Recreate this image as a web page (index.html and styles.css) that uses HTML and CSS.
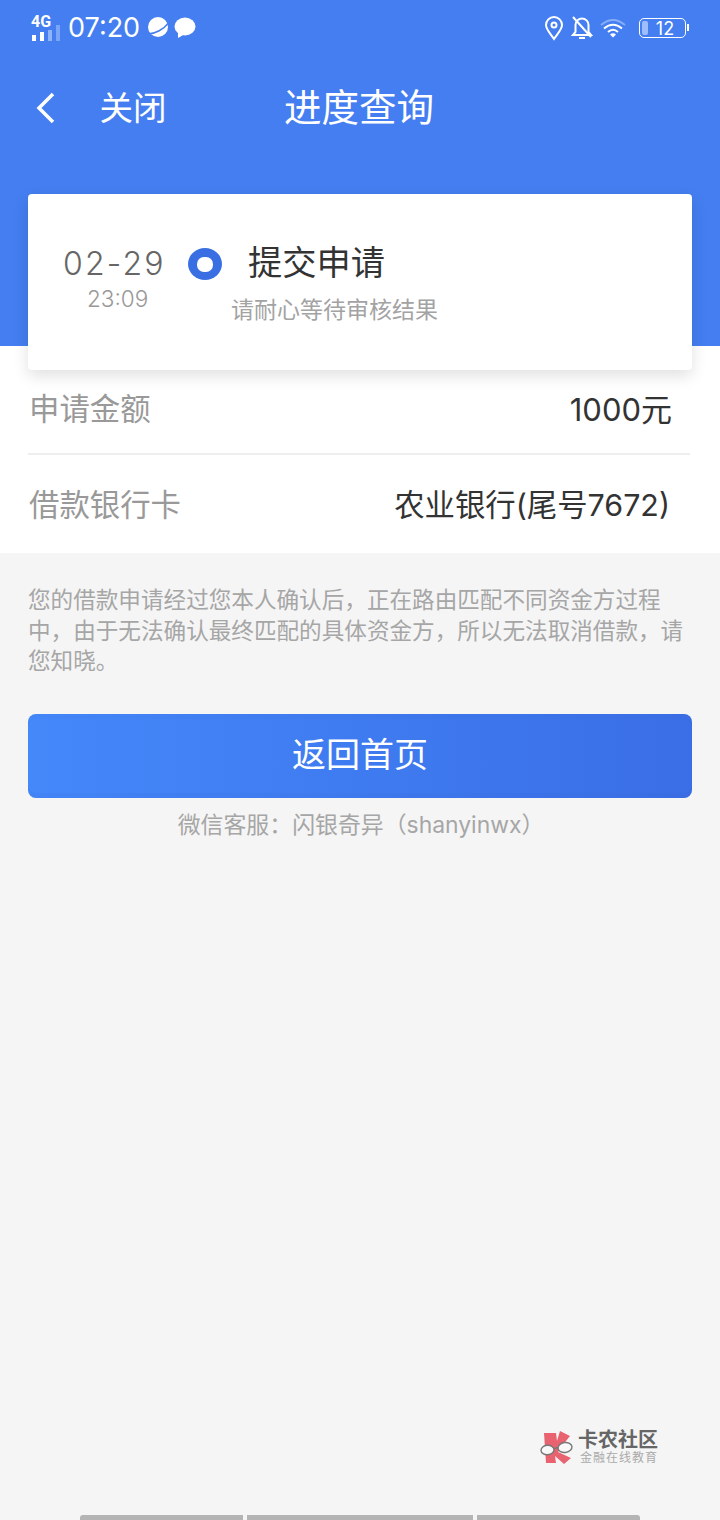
FILE: index.html
```html
<!DOCTYPE html>
<html lang="zh">
<head>
<meta charset="utf-8">
<title>进度查询</title>
<link rel="stylesheet" href="styles.css">
</head>
<body>
<div class="page">
  <header class="hero">
    <div class="status">
      <div class="status-left">
        <div class="signal">
          <span class="net">4G</span>
          <svg class="bars" width="30" height="17" viewBox="0 0 30 17"><rect x="0" y="10" width="4" height="6" fill="#fff"/><rect x="8" y="7" width="4" height="9" fill="#fff"/><rect x="16" y="5" width="4" height="11" fill="#8fb4fa"/><rect x="24" y="0" width="4" height="16" fill="#7ba6f8"/></svg>
        </div>
        <span class="clock">07:20</span>
        <svg class="sicon" width="22" height="22" viewBox="0 0 22 22"><circle cx="11" cy="10" r="10" fill="#fff"/><path d="M1 17C8 17 17 12 21.500 6" fill="none" stroke="#447ef0" stroke-width="1.500"/></svg>
        <svg class="sicon chat" width="22" height="22" viewBox="0 0 22 22"><ellipse cx="11" cy="9.500" rx="10.500" ry="9" fill="#fff"/><path d="M4 14l0 7 7-4z" fill="#fff"/></svg>
      </div>
      <div class="status-right">
        <svg width="20" height="26" viewBox="0 0 20 26"><path d="M10 24C5 17 2 14 2 10a8 8 0 0 1 16 0c0 4-3 7-8 14z" fill="none" stroke="#fff" stroke-width="2"/><circle cx="10" cy="10" r="2.500" fill="none" stroke="#fff" stroke-width="2"/></svg>
        <svg width="22" height="26" viewBox="0 0 22 26"><path d="M2 20h18l-2.500-3V10a6.500 6.500 0 0 0-13 0v7z" fill="none" stroke="#fff" stroke-width="2"/><path d="M8 23h6" stroke="#fff" stroke-width="2"/><path d="M2 2l18 20" stroke="#fff" stroke-width="2"/></svg>
        <svg width="26" height="20" viewBox="0 0 26 20"><path d="M1 7Q13-3 25 7" fill="none" stroke="#86adf9" stroke-width="2"/><path d="M4 10.500Q13 3 22 10.500" fill="none" stroke="#fff" stroke-width="2"/><path d="M8 14Q13 9.500 18 14" fill="none" stroke="#fff" stroke-width="2"/><path d="M10 16.500Q13 14 16 16.500L13 19.500z" fill="#fff"/></svg>
        <div class="battery"><span class="level"></span><span class="pct">12</span></div>
      </div>
    </div>
    <nav class="nav">
      <svg class="back" width="22" height="34" viewBox="0 0 22 34"><path d="M19 3L5 17l14 14" fill="none" stroke="#fff" stroke-width="3.500"/></svg>
      <span class="close">关闭</span>
      <h1 class="title">进度查询</h1>
    </nav>
  </header>

  <section class="card">
    <div class="when">
      <div class="date">02-29</div>
      <div class="time">23:09</div>
    </div>
    <div class="dot"></div>
    <div class="what">
      <div class="step">提交申请</div>
      <div class="hint">请耐心等待审核结果</div>
    </div>
  </section>

  <section class="details">
    <div class="row first">
      <span class="label">申请金额</span>
      <span class="value">1000元</span>
    </div>
    <div class="row second">
      <span class="label wide">借款银行卡</span>
      <span class="value">农业银行(尾号7672)</span>
    </div>
  </section>

  <p class="notice">您的借款申请经过您本人确认后，正在路由匹配不同资金方过程<br>中，由于无法确认最终匹配的具体资金方，所以无法取消借款，请<br>您知晓。</p>

  <button class="home">返回首页</button>
  <p class="service">微信客服：闪银奇异（shanyinwx）</p>

  <div class="watermark">
    <svg width="36" height="36" viewBox="0 0 36 36">
      <path d="M4 3H16L17 11L20 1L30 6L22 16L18 22L31 28L24 34L15 26L16 33H6z" fill="#e8626f"/>
      <ellipse cx="7.500" cy="20" rx="6.500" ry="4.800" fill="#f8f8f8" stroke="#777" stroke-width="1.400" transform="rotate(-4 7.500 20)"/>
      <ellipse cx="25" cy="17.500" rx="7" ry="5" fill="#f8f8f8" stroke="#777" stroke-width="1.400" transform="rotate(-8 25 17.500)"/>
      <path d="M14 19Q16 17 18 18" fill="none" stroke="#777" stroke-width="1.400"/>
    </svg>
    <div class="mark-text">
      <div class="mark-name">卡农社区</div>
      <div class="mark-sub">金融在线教育</div>
    </div>
  </div>

  <div class="tabs">
    <span class="tab t1"></span>
    <span class="tab t2"></span>
    <span class="tab t3"></span>
  </div>
</div>
</body>
</html>
```
FILE: styles.css
```css
* { box-sizing: border-box; }
html, body { margin: 0; padding: 0; }
body {
  width: 720px;
  height: 1520px;
  overflow: hidden;
  background: #f5f5f5;
  font-family: Inter, "Noto Sans CJK SC", sans-serif;
}
.page { display: flex; flex-direction: column; height: 1520px; }

.hero { height: 346px; flex: none; background: #447ef0; color: #fff; }
.status {
  height: 56px;
  padding: 0 34px 0 31px;
  display: flex;
  justify-content: space-between;
  align-items: center;
}
.status-left { display: flex; align-items: center; gap: 8px; }
.status-right { display: flex; align-items: center; gap: 7px; }
.signal { width: 30px; height: 26px; position: relative; }
.net { display: block; font: 700 16px/16px Roboto, sans-serif; margin-top: -1px; }
.bars { position: absolute; left: 1px; top: 10px; }
.clock { font-size: 27px; line-height: 30px; margin-left: -1px; }
.sicon { flex: none; margin-left: -1px; }
.chat { margin-left: -3px; }
.battery {
  width: 47px;
  height: 20px;
  border: 1.500px solid #fff;
  border-radius: 5px;
  position: relative;
  margin-left: 6px;
  display: flex;
  align-items: center;
  justify-content: center;
  padding-left: 5px;
}
.battery::after {
  content: "";
  position: absolute;
  right: -4px;
  top: 5px;
  width: 2px;
  height: 7px;
  background: #fff;
}
.level { position: absolute; left: 2px; top: 2px; bottom: 2px; width: 6px; background: #9dbefa; border-radius: 2px; }
.pct { font-size: 18px; line-height: 17px; }

.nav { display: flex; align-items: center; height: 52px; padding-left: 34px; margin-top: 25.500px; }
.back { flex: none; }
.close { font-size: 33.500px; line-height: 44px; margin-left: 43.500px; width: 66px; white-space: nowrap; }
.title { margin: 0 0 0 118.500px; font-size: 37.500px; line-height: 48px; font-weight: 400; white-space: nowrap; }

.card {
  position: relative;
  z-index: 2;
  margin: -152px 28px 0;
  height: 176px;
  flex: none;
  background: #fff;
  border-radius: 4px;
  box-shadow: 0 6px 16px rgba(0, 0, 0, 0.12);
  display: flex;
  align-items: flex-start;
}
.when { width: 160px; padding-left: 35px; padding-top: 50px; flex: none; }
.date { font-size: 32px; line-height: 40px; color: #666; letter-spacing: 2.200px; font-weight: 300; white-space: nowrap; }
.time { font-size: 22.500px; line-height: 29px; color: #999; margin-left: 24px; font-weight: 300; }
.dot {
  width: 34px;
  height: 32px;
  margin-top: 54px;
  flex: none;
  border-radius: 50%;
  background: #3a6fe4;
  display: flex;
  align-items: center;
  justify-content: center;
}
.dot::after {
  content: "";
  width: 16px;
  height: 15px;
  border-radius: 7px;
  background: #fff;
}
.what { margin-left: 10px; padding-top: 46px; }
.step { font-size: 34.250px; line-height: 46px; color: #333; margin-left: 16px; white-space: nowrap; }
.hint { font-size: 23px; line-height: 30px; color: #a3a3a3; margin-top: 9px; white-space: nowrap; margin-left: -1px; }

.details { background: #fff; height: 207px; flex: none; margin-top: -24px; padding: 24px 30px 0 28px; }
.row { display: flex; justify-content: space-between; align-items: center; }
.row.first { height: 85px; padding-bottom: 9px; border-bottom: 2px solid #eeeeee; }
.row.second { height: 98px; padding-bottom: 3px; }
.label { font-size: 30.400px; color: #999; white-space: nowrap; padding-left: 1px; }
.value { font-size: 30.400px; color: #333; white-space: nowrap; padding-right: 20px; }
.first .value { padding-right: 18px; font-size: 31px; }

.notice {
  margin: 32px 0 0 28px;
  font-size: 22.600px;
  line-height: 30.500px;
  color: #a6a6a6;
  flex: none;
  white-space: nowrap;
}

.home {
  margin: 37.500px 28px 0;
  height: 84px;
  flex: none;
  border: none;
  border-radius: 8px;
  padding: 0 0 8px;
  background: linear-gradient(90deg, #4488fa, #3a6ee6);
  box-shadow: inset 0 5px 0 rgba(50, 90, 200, 0.05), inset 0 -5px 0 rgba(50, 90, 200, 0.08);
  color: #fff;
  font-family: inherit;
  font-size: 34px;
}
.service { margin: 8.500px 0 0 2px; text-align: center; color: #a6a6a6; font-size: 22.900px; line-height: 36px; }

.watermark { margin: auto 62px 0 auto; display: flex; align-items: center; gap: 2px; height: 40px; }
.mark-text { display: flex; flex-direction: column; }
.mark-name { font-size: 20px; line-height: 22px; font-weight: 700; color: #666; margin-top: -3px; }
.mark-sub { font-size: 12px; line-height: 14px; color: #aaa; letter-spacing: 1px; margin-left: 2px; }

.tabs { margin: 47px 80px 0; height: 5px; display: flex; gap: 3px; flex: none; }
.tab { background: #b4b4b4; height: 5px; }
.t1 { width: 163px; margin-right: 1px; border-radius: 3px 0 0 0; }
.t2 { width: 226px; margin-right: 1px; }
.t3 { width: 163px; border-radius: 0 3px 0 0; }
```
